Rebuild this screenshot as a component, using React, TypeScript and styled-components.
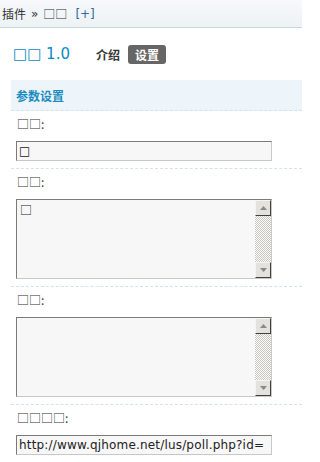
import React from "react";
import styled, { createGlobalStyle } from "styled-components";

const Global = createGlobalStyle`
  html, body { margin: 0; padding: 0; background: #fff; }
  body {
    font-family: "DejaVu Sans", "Noto Sans CJK SC", sans-serif;
    font-size: 12px;
    color: #333;
  }
`;

const Page = styled.div`
  width: 302px;
  height: 462px;
  overflow: hidden;
  background: #fff;
`;

const Breadcrumb = styled.div`
  height: 27px;
  display: flex;
  align-items: center;
  gap: 5px;
  padding-left: 2px;
  background: linear-gradient(#f7f9fb, #edf2f5);
  border-bottom: 1px solid #c8d6df;
  font-family: "Noto Sans CJK SC", sans-serif;
  font-size: 12px;
  color: #333;
`;

const Crumb = styled.span<{ $link?: boolean; $latin?: boolean }>`
  color: ${(p) => (p.$link ? "#2e6a99" : "#333")};
  font-family: ${(p) => (p.$link || p.$latin ? '"DejaVu Sans", sans-serif' : "inherit")};
  margin-left: ${(p) => (p.$link ? "3px" : "0")};
`;

const TitleRow = styled.div`
  height: 52px;
  display: flex;
  align-items: center;
  padding-left: 13px;
`;

const Title = styled.h2`
  margin: 0;
  font-family: "DejaVu Sans", "Noto Sans CJK SC", sans-serif;
  font-size: 15px;
  font-weight: normal;
  color: #0b8cc3;
  width: 83px;
  white-space: nowrap;
`;

const Tabs = styled.div`
  display: flex;
  align-items: center;
  gap: 8px;
`;

const Tab = styled.span<{ $active?: boolean }>`
  font-family: "Noto Sans CJK SC", sans-serif;
  font-weight: bold;
  font-size: 12px;
  line-height: 19px;
  padding: 0 ${(p) => (p.$active ? "7px" : "0")};
  border-radius: 3px;
  color: ${(p) => (p.$active ? "#fff" : "#333")};
  background: ${(p) => (p.$active ? "#666" : "transparent")};
`;

const Section = styled.div`
  margin-left: 11px;
`;

const SectionHead = styled.div`
  height: 30px;
  display: flex;
  align-items: center;
  padding-left: 5px;
  background: #eef5fa;
  border-bottom: 1px dashed #d6e2ea;
  font-family: "Noto Sans CJK SC", sans-serif;
  font-weight: bold;
  font-size: 12px;
  color: #1a8cc0;
`;

const Row = styled.div`
  padding: 6px 0 7px 5px;
  border-bottom: 1px dashed #d6e2ea;
`;

const Label = styled.div`
  font-family: "Noto Sans CJK SC", sans-serif;
  font-size: 12px;
  line-height: 14px;
  height: 14px;
  margin-bottom: 10px;
  padding-left: 1px;
  color: #333;
`;

const TextInput = styled.input`
  box-sizing: border-box;
  display: block;
  width: 256px;
  height: 20px;
  margin: 0;
  padding: 0 2px;
  background: #f7f7f7;
  border: 1px solid;
  border-color: #7a7a7a #c8c8c8 #c8c8c8 #7a7a7a;
  font-family: "DejaVu Sans", "Noto Sans CJK SC", sans-serif;
  font-size: 12px;
  letter-spacing: 0.18px;
  color: #222;
  outline: none;
`;

const AreaBox = styled.div`
  box-sizing: border-box;
  width: 256px;
  height: 80px;
  display: flex;
  background: #f7f7f7;
  border: 1px solid;
  border-color: #7a7a7a #c8c8c8 #c8c8c8 #7a7a7a;
`;

const AreaText = styled.textarea`
  flex: 1;
  margin: 0;
  border: 0;
  padding: 2px 3px;
  background: transparent;
  resize: none;
  outline: none;
  overflow: hidden;
  font-family: "Noto Sans CJK SC", sans-serif;
  font-size: 12px;
  line-height: 16px;
  color: #222;
`;

const ScrollBar = styled.div`
  width: 16px;
  display: flex;
  flex-direction: column;
  justify-content: space-between;
  background: repeating-conic-gradient(#c9c6c0 0 25%, #fbfbfa 0 50%) 0 0 / 2px 2px;
`;

const ScrollBtn = styled.div`
  box-sizing: border-box;
  width: 16px;
  height: 16px;
  display: flex;
  align-items: center;
  justify-content: center;
  background: #e4e2dd;
  border: 1px solid;
  border-color: #f4f4f2 #404040 #404040 #f4f4f2;
`;

const Arrow = ({ down }: { down?: boolean }) => (
  <svg width="7" height="4" viewBox="0 0 7 4">
    <path d={down ? "M0 0h7L3.5 4z" : "M3.5 0L7 4H0z"} fill="#8a8a8a" />
  </svg>
);

const TextArea = ({ value }: { value: string }) => (
  <AreaBox>
    <AreaText defaultValue={value} />
    <ScrollBar>
      <ScrollBtn>
        <Arrow />
      </ScrollBtn>
      <ScrollBtn>
        <Arrow down />
      </ScrollBtn>
    </ScrollBar>
  </AreaBox>
);

export default function App() {
  return (
    <Page>
      <Global />
      <Breadcrumb>
        <Crumb>插件</Crumb>
        <Crumb $latin>»</Crumb>
        <Crumb>□□</Crumb>
        <Crumb $link>[+]</Crumb>
      </Breadcrumb>
      <TitleRow>
        <Title>□□ 1.0</Title>
        <Tabs>
          <Tab>介绍</Tab>
          <Tab $active>设置</Tab>
        </Tabs>
      </TitleRow>
      <Section>
        <SectionHead>参数设置</SectionHead>
        <Row>
          <Label>□□:</Label>
          <TextInput defaultValue="□" />
        </Row>
        <Row>
          <Label>□□:</Label>
          <TextArea value="□" />
        </Row>
        <Row>
          <Label>□□:</Label>
          <TextArea value="" />
        </Row>
        <Row>
          <Label>□□□□:</Label>
          <TextInput defaultValue="http://www.qjhome.net/lus/poll.php?id=" />
        </Row>
      </Section>
    </Page>
  );
}
